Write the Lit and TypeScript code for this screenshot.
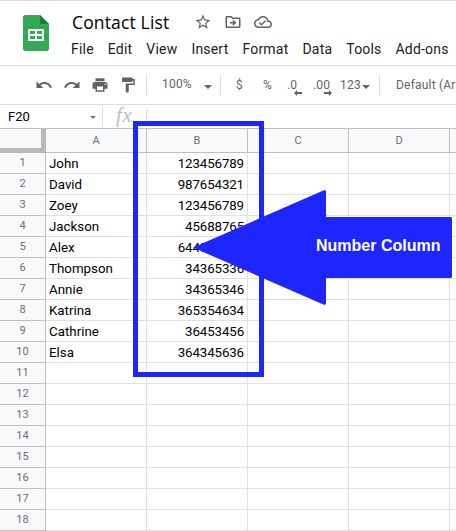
import { LitElement, html, css, svg } from "lit";
import { customElement } from "lit/decorators.js";

const MENUS = ["File", "Edit", "View", "Insert", "Format", "Data", "Tools", "Add-ons"];
const COLUMNS = ["A", "B", "C", "D", ""];
const CONTACTS: [string, string][] = [
  ["John", "123456789"],
  ["David", "987654321"],
  ["Zoey", "123456789"],
  ["Jackson", "45688765"],
  ["Alex", "644534534"],
  ["Thompson", "34365336"],
  ["Annie", "34365346"],
  ["Katrina", "365354634"],
  ["Cathrine", "36453456"],
  ["Elsa", "364345636"],
];
const ROW_COUNT = 18;

const icon = (size: number, body: unknown) =>
  html`<svg width=${size} height=${size} viewBox="0 0 24 24" fill="currentColor">${body}</svg>`;

const STAR = svg`<path d="M22 9.24l-7.19-.62L12 2 9.19 8.63 2 9.24l5.46 4.73L5.82 21 12 17.27 18.18 21l-1.63-7.03L22 9.24zM12 15.4l-3.76 2.27 1-4.28-3.32-2.88 4.38-.38L12 6.1l1.71 4.04 4.38.38-3.32 2.88 1 4.28L12 15.4z"/>`;
const MOVE = svg`<path d="M20 6h-8l-2-2H4c-1.1 0-2 .9-2 2v12c0 1.1.9 2 2 2h16c1.1 0 2-.9 2-2V8c0-1.1-.9-2-2-2zm0 12H4V6h5.17l2 2H20v10zm-7.600-1L16.400 13l-4-4-1.400 1.400L12.600 12H8v2h4.600L11 15.600z"/>`;
const CLOUD = svg`<path d="M19.35 10.04C18.67 6.59 15.64 4 12 4 9.11 4 6.6 5.64 5.35 8.04 2.34 8.36 0 10.91 0 14c0 3.31 2.69 6 6 6h13c2.760 0 5-2.240 5-5 0-2.640-2.050-4.780-4.650-4.960zM19 18H6c-2.210 0-4-1.790-4-4 0-2.050 1.530-3.760 3.560-3.970l1.070-.110.500-.950C8.080 7.140 9.940 6 12 6c2.620 0 4.880 1.860 5.390 4.430l.300 1.500 1.530.110c1.560.100 2.780 1.410 2.780 2.960 0 1.650-1.350 3-3 3zm-9-3.820l-2.090-2.090L6.500 13.500 10 17l6.010-6.010-1.410-1.410z"/>`;
const UNDO = svg`<path d="M12.5 8c-2.650 0-5.050.990-6.900 2.600L2 7v9h9l-3.620-3.620c1.390-1.160 3.160-1.880 5.120-1.880 3.540 0 6.550 2.310 7.600 5.500l2.370-.780C21.080 11.030 17.150 8 12.500 8z"/>`;
const REDO = svg`<path d="M18.400 10.600C16.550 8.990 14.150 8 11.500 8c-4.650 0-8.580 3.030-9.960 7.220L3.900 16c1.050-3.190 4.050-5.500 7.600-5.500 1.950 0 3.730.720 5.120 1.880L13 16h9V7l-3.600 3.600z"/>`;
const PRINT = svg`<path d="M19 8H5c-1.660 0-3 1.340-3 3v6h4v4h12v-4h4v-6c0-1.660-1.340-3-3-3zm-3 11H8v-5h8v5zm3-7c-.550 0-1-.450-1-1s.450-1 1-1 1 .450 1 1-.450 1-1 1zM18 3H6v4h12V3z"/>`;
const PAINT = svg`<path d="M18 4V3c0-.550-.450-1-1-1H5c-.550 0-1 .450-1 1v4c0 .550.450 1 1 1h12c.550 0 1-.450 1-1V6h1v4H9v11c0 .550.450 1 1 1h2c.550 0 1-.450 1-1v-9h8V4h-3z"/>`;

@customElement("sheet-header")
class SheetHeader extends LitElement {
  static styles = css`
    :host { display: flex; height: 64px; border-top: 1px solid #dadce0; border-bottom: 1px solid #dadce0; background: #fff; }
    .logo { display: block; margin: 14px 0 0 23px; flex: none; }
    .main { margin-left: 23px; }
    .titlebar { display: flex; height: 24px; margin-top: 9px; align-items: center; color: #5f6368; }
    .title { font: 17.5px/24px "Open Sans", sans-serif; color: #000; width: 122px; letter-spacing: 0.15px; white-space: nowrap; }
    .icons { display: flex; gap: 12px; }
    svg { display: block; }
    .menus { display: flex; gap: 14px; margin: 5px 0 0 -1px; font: 14px/20px Roboto, sans-serif; letter-spacing: 0.2px; color: #202124; white-space: nowrap; }
  `;
  render() {
    return html`
      <svg class="logo" width="26" height="36" viewBox="0 0 26 36">
        <path d="M2.500 0H17l9 9v24.500a2.500 2.500 0 0 1-2.500 2.500h-21A2.500 2.500 0 0 1 0 33.500V2.500A2.500 2.500 0 0 1 2.500 0z" fill="#34a853"/>
        <path d="M17 0l9 9h-9z" fill="#188038"/>
        <path fill-rule="evenodd" fill="#fff" d="M5 14h16v12H5zM7 16v3h5v-3zM14 16v3h5v-3zM7 21v3h5v-3zM14 21v3h5v-3z"/>
      </svg>
      <div class="main">
        <div class="titlebar">
          <span class="title">Contact List</span>
          <div class="icons">${icon(18, STAR)}${icon(18, MOVE)}${icon(18, CLOUD)}</div>
        </div>
        <div class="menus">${MENUS.map((m) => html`<span>${m}</span>`)}</div>
      </div>
    `;
  }
}

@customElement("sheet-toolbar")
class SheetToolbar extends LitElement {
  static styles = css`
    :host { display: flex; height: 38px; border-bottom: 1px solid #dadce0; align-items: center; background: #fff; color: #5f6368; font: 12px/16px Roboto, sans-serif; letter-spacing: 0.2px; white-space: nowrap; overflow: hidden; }
    span, svg, .actions { flex: none; }
    svg { display: block; }
    .actions { display: flex; gap: 10px; margin-left: 35px; }
    .rule { width: 1px; height: 20px; background: #dadce0; flex: none; }
    .actions + .rule { margin-left: 9px; }
    .zoom { margin: -2px 0 0 15px; width: 42px; }
    .caret { width: 0; height: 0; border: 4px solid transparent; border-top-color: #5f6368; border-bottom: 0; flex: none; margin-top: 3px; }
    .zoom + .caret + .rule { margin-left: 8px; }
    .currency { margin-left: 15px; width: 27px; }
    .percent { width: 24px; }
    .decimal { display: flex; flex-direction: column; width: 26px; height: 18px; margin-top: 1px; }
    .decimal svg { align-self: flex-start; margin: -3px 0 0 7px; }
    .decimal.more { width: 27px; }
    .decimal.more svg { margin-left: 11px; }
    .formats { width: 22px; }
    .caret.end + .rule { margin-left: 9px; }
    .font { margin-left: 16px; }
  `;
  render() {
    return html`
      <div class="actions">${icon(18, UNDO)}${icon(18, REDO)}${icon(18, PRINT)}${icon(18, PAINT)}</div>
      <div class="rule"></div>
      <span class="zoom">100%</span><i class="caret"></i>
      <div class="rule"></div>
      <span class="currency">$</span><span class="percent">%</span>
      <span class="decimal"><span>.0</span><svg width="8" height="6" viewBox="0 0 8 6"><path d="M0 3l3-3v2h5v2H3v2z" fill="#5f6368"/></svg></span>
      <span class="decimal more"><span>.00</span><svg width="8" height="6" viewBox="0 0 8 6"><path d="M8 3L5 0v2H0v2h5v2z" fill="#5f6368"/></svg></span>
      <span class="formats">123</span><i class="caret end"></i>
      <div class="rule"></div>
      <span class="font">Default (Arial)</span>
    `;
  }
}

@customElement("formula-bar")
class FormulaBar extends LitElement {
  static styles = css`
    :host { display: flex; height: 23px; align-items: center; border-bottom: 1px solid #c0c0c0; background: #fff; }
    .name { width: 82px; padding-left: 8px; font: 13px/22px Roboto, sans-serif; color: #000; }
    .caret { border: 3px solid transparent; border-top-color: #777; border-bottom: 0; margin-top: 2px; }
    .rule { width: 1px; height: 20px; background: #dadce0; margin-left: 6px; }
    .fx { width: 33px; margin-left: 13px; font: italic 21px/22px "Liberation Serif", serif; color: #bdbdbd; letter-spacing: 0.6px; margin-top: -4px; }
    .fx + .rule { margin-left: -3px; height: 16px; }
  `;
  render() {
    return html`<span class="name">F20</span><i class="caret"></i><div class="rule"></div><span class="fx">fx</span><div class="rule"></div>`;
  }
}

@customElement("sheet-grid")
class SheetGrid extends LitElement {
  static styles = css`
    :host { display: grid; grid-template-columns: 46px repeat(5, 101px); grid-template-rows: 24px; grid-auto-rows: 21px; width: 551px; font: 13.33px/22px Roboto, sans-serif; color: #000; background: #fff; }
    div { box-sizing: border-box; border-right: 1px solid #e1e1e1; border-bottom: 1px solid #e1e1e1; white-space: nowrap; }
    .corner { background: #f8f9fa; border-right: 5px solid #b9b9b9; border-bottom: 5px solid #b9b9b9; }
    .col, .row { background: #f8f9fa; border-color: #c0c0c0; color: #6b6f73; text-align: center; font-size: 11px; }
    .col { line-height: 24px; }
    .row { line-height: 19px; }
    .text { padding-left: 3px; }
    .number { text-align: right; padding-right: 3px; letter-spacing: -0.12px; }
  `;
  render() {
    const rows = Array.from({ length: ROW_COUNT }, (_, i) => CONTACTS[i] ?? ["", ""]);
    return html`
      <div class="corner"></div>
      ${COLUMNS.map((c) => html`<div class="col">${c}</div>`)}
      ${rows.map(
        ([name, phone], i) => html`
          <div class="row">${i + 1}</div>
          <div class="text">${name}</div>
          <div class="number">${phone}</div>
          <div></div><div></div><div></div>
        `,
      )}
    `;
  }
}

@customElement("app-root")
class AppRoot extends LitElement {
  static styles = css`
    :host { display: block; position: relative; width: 456px; height: 531px; overflow: hidden; background: #fff; }
    .frame { position: absolute; left: 133px; top: 121px; box-sizing: border-box; width: 131px; height: 256px; border: 5px solid #1d26ff; }
    .arrow { position: absolute; left: 193px; top: 190px; }
    .label { position: absolute; left: 316px; top: 236px; font: bold 16px/20px "Liberation Sans", sans-serif; color: #fff; white-space: nowrap; }
  `;
  render() {
    return html`
      <sheet-header></sheet-header>
      <sheet-toolbar></sheet-toolbar>
      <formula-bar></formula-bar>
      <sheet-grid></sheet-grid>
      <div class="frame"></div>
      <svg class="arrow" width="259" height="115" viewBox="0 0 259 115">
        <path d="M0 57.500L131.500 0 133 1V27H258L259 28V87L258 88H133V114L131.500 115z" fill="#1d26ff"/>
      </svg>
      <div class="label">Number Column</div>
    `;
  }
}
